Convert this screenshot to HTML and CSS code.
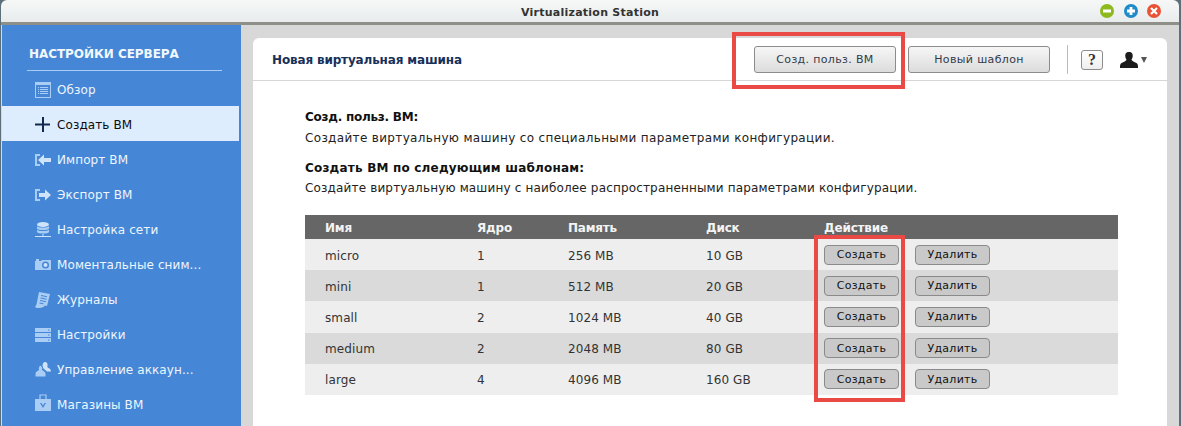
FILE: index.html
```html
<!DOCTYPE html>
<html lang="ru">
<head>
<meta charset="utf-8">
<title>Virtualization Station</title>
<link rel="stylesheet" href="styles.css">
</head>
<body>
<div class="window">
  <header class="titlebar">
    <span class="title">Virtualization Station</span>
    <div class="winbtns">
      <svg class="winbtn" viewBox="0 0 14 14"><circle cx="7" cy="7" r="7" fill="#8db81e"/><rect x="3" y="5.5" width="8" height="3" fill="#fff"/></svg>
      <svg class="winbtn" viewBox="0 0 14 14"><circle cx="7" cy="7" r="7" fill="#1f8bc8"/><path d="M3 5.6h2.6V3h2.8v2.6H11v2.8H8.4V11H5.6V8.4H3z" fill="#fff"/></svg>
      <svg class="winbtn" viewBox="0 0 14 14"><circle cx="7" cy="7" r="7" fill="#ea5236"/><path d="M4 4l6 6M10 4l-6 6" stroke="#fff" stroke-width="2.2"/></svg>
    </div>
  </header>
  <div class="body">
    <aside class="sidebar">
      <h2 class="side-title">НАСТРОЙКИ СЕРВЕРА</h2>
      <nav class="side-nav">
        <a class="item"><svg class="ico" viewBox="0 0 16 16"><path d="M0 0h16v16H0z" fill="#a9cdf5"/><path d="M1 3h14v12H1z" fill="#4587d6"/><path d="M3 5h1v1H3zM5 5h8v1H5zM3 7h1v1H3zM5 7h8v1H5zM3 9h1v1H3zM5 9h8v1H5zM3 11h1v1H3zM5 11h8v1H5z" fill="#a9cdf5"/></svg>Обзор</a>
        <a class="item active"><svg class="ico" viewBox="0 0 16 16"><path d="M7 0h2v15H7zM0 6.500h15v2H0z" fill="#10294f"/></svg>Создать ВМ</a>
        <a class="item"><svg class="ico" viewBox="0 0 16 16"><path d="M0 2h5v2H2v8h3v2H0z" fill="#a9cdf5"/><path d="M3 8l6-5.500V6h7v4H9v3.500z" fill="#cfe3fa"/></svg>Импорт ВМ</a>
        <a class="item"><svg class="ico" viewBox="0 0 16 16"><path d="M0 2h5v2H2v8h3v2H0z" fill="#a9cdf5"/><path d="M16 8l-6-5.500V6H4v4h6v3.500z" fill="#cfe3fa"/></svg>Экспорт ВМ</a>
        <a class="item"><svg class="ico" viewBox="0 0 16 16"><ellipse cx="8" cy="2.500" rx="6" ry="2.500" fill="#cfe3fa"/><path d="M2 4c1 2 11 2 12 0v2.500c-1 2-11 2-12 0zM2 7.500c1 2 11 2 12 0V10c-1 2-11 2-12 0z" fill="#a9cdf5"/><path d="M7.500 12h1v2h-1zM0 14h16v1H0z" fill="#cfe3fa"/></svg>Настройка сети</a>
        <a class="item"><svg class="ico" viewBox="0 0 16 16"><path d="M0 4h1V2h3v2h2l1-1h9v10H0z" fill="#a9cdf5"/><circle cx="10.500" cy="8" r="3.500" fill="#4587d6"/><circle cx="10.500" cy="8" r="2" fill="#cfe3fa"/></svg>Моментальные сним...</a>
        <a class="item"><svg class="ico" viewBox="0 0 16 16"><path d="M4 0l11 2-3 12-2-.4C9 15 7 16 4 16c-2 0-4-.5-4-1.500 1-.5 1.500-2 1.800-3.500z" fill="#a9cdf5"/><path d="M6 3.500l6 1.200M5.500 6l6 1.200M5 8.500l6 1.200M4.500 11l4 .8" stroke="#4587d6"/></svg>Журналы</a>
        <a class="item"><svg class="ico" viewBox="0 0 16 16"><path d="M0 1h16v4H0zM0 6h16v4H0zM0 11h16v4H0z" fill="#a9cdf5"/><path d="M13 2.500h1.500v1H13zM13 7.500h1.500v1H13zM13 12.500h1.500v1H13z" fill="#4587d6"/></svg>Настройки</a>
        <a class="item"><svg class="ico" viewBox="0 0 16 16"><path d="M10 0c2.500 0 3 2.500 2.300 5 1.500 1.500 3.700 1.500 3.700 4.500h-4L8 6c-1-3 0-6 2-6z" fill="#cfe3fa"/><path d="M5.500 3.500c2 0 2.500 2.500 2 4.500 1.500 1 3.500 1.500 3.500 4v3H0v-3c0-2.500 2-3 3.500-4C3 6 3.500 3.500 5.500 3.500z" fill="#a9cdf5" stroke="#4587d6"/></svg>Управление аккаун...</a>
        <a class="item"><svg class="ico ico-tall" viewBox="0 0 16 18"><path d="M5 5V1h6v4" fill="none" stroke="#a9cdf5" stroke-width="1.200"/><path d="M0 5h16v12H0z" fill="#a9cdf5"/><path d="M5 9l3 5 3-5h-1.500L8 11.500 6.500 9z" fill="#4587d6"/></svg>Магазины ВМ</a>
      </nav>
    </aside>
    <main class="main">
      <section class="card">
        <div class="card-head">
          <h1 class="card-title">Новая виртуальная машина</h1>
          <div class="actions">
            <button class="btn">Созд. польз. ВМ</button>
            <button class="btn">Новый шаблон</button>
            <span class="divider"></span>
            <span class="help">?</span>
            <svg class="user" viewBox="0 0 27 16"><path d="M9 0c3 0 4 2 3.700 4.500-.2 1.500-.8 2.500-1.300 3.300.3 1.200 3 2.200 5 3.200 1.600.9 1.600 2.500 1.600 5H0c0-2.500 0-4.100 1.600-5 2-1 4.700-2 5-3.200C6.100 7 5.500 6 5.300 4.500 5 2 6 0 9 0z" fill="#1c1c1c"/><path d="M21 5h6l-3 6z" fill="#555"/></svg>
          </div>
        </div>
        <div class="card-body">
          <p class="lead lead-1">Созд. польз. ВМ:</p>
          <p class="desc desc-1">Создайте виртуальную машину со специальными параметрами конфигурации.</p>
          <p class="lead lead-2">Создать ВМ по следующим шаблонам:</p>
          <p class="desc desc-2">Создайте виртуальную машину с наиболее распространенными параметрами конфигурации.</p>
          <table class="vm-table">
            <thead>
              <tr><th class="c-name">Имя</th><th class="c-core">Ядро</th><th class="c-mem">Память</th><th class="c-disk">Диск</th><th>Действие</th></tr>
            </thead>
            <tbody>
              <tr><td>micro</td><td>1</td><td>256 MB</td><td>10 GB</td><td><button class="rbtn">Создать</button><button class="rbtn">Удалить</button></td></tr>
              <tr><td>mini</td><td>1</td><td>512 MB</td><td>20 GB</td><td><button class="rbtn">Создать</button><button class="rbtn">Удалить</button></td></tr>
              <tr><td>small</td><td>2</td><td>1024 MB</td><td>40 GB</td><td><button class="rbtn">Создать</button><button class="rbtn">Удалить</button></td></tr>
              <tr><td>medium</td><td>2</td><td>2048 MB</td><td>80 GB</td><td><button class="rbtn">Создать</button><button class="rbtn">Удалить</button></td></tr>
              <tr><td>large</td><td>4</td><td>4096 MB</td><td>160 GB</td><td><button class="rbtn">Создать</button><button class="rbtn">Удалить</button></td></tr>
            </tbody>
          </table>
        </div>
      </section>
    </main>
  </div>
</div>
<div class="mark mark-top"></div>
<div class="mark mark-col"></div>
</body>
</html>
```
FILE: styles.css
```css
* { box-sizing: border-box; }
html, body { margin: 0; height: 100%; overflow: hidden; }
body {
  background: #5d6f78;
  font-family: "DejaVu Sans", Verdana, sans-serif;
  font-size: 12px;
  color: #222;
  position: relative;
}
.window {
  height: 426px;
  margin: 0 2px 0 1px;
  display: flex;
  flex-direction: column;
}
.titlebar {
  height: 25px;
  flex: none;
  position: relative;
  display: flex;
  align-items: center;
  justify-content: center;
  padding: 3px 0 0;
  background: linear-gradient(#f6f8f8, #e9ecec);
  border-bottom: 3px solid #8f8f8a;
  border-radius: 6px 6px 0 0;
}
.title {
  font-size: 11px;
  font-weight: bold;
  color: #333;
  letter-spacing: 0.25px;
}
.winbtns {
  position: absolute;
  right: 18px;
  top: 4px;
  display: flex;
  gap: 9.5px;
}
.winbtn { width: 14px; height: 14px; display: block; }
.body { flex: 1; display: flex; min-height: 0; background: #d8d8d8; }
.sidebar {
  width: 239px;
  flex: none;
  background: #4587d6;
  padding-top: 21px;
  margin-left: 1px;
}
.side-title {
  margin: 0 19px 0 25px;
  padding: 0 0 9px 2px;
  height: 25px;
  font-size: 12px;
  line-height: 16px;
  font-weight: bold;
  color: #f2f7fd;
  letter-spacing: -0.05px;
  border-bottom: 1px solid #a9cdf5;
  white-space: nowrap;
}
.item {
  height: 35px;
  margin-right: 2px;
  display: flex;
  align-items: center;
  padding: 2px 0 0 33px;
  color: #eef5fd;
  letter-spacing: 0.1px;
  white-space: nowrap;
}
.item.active { background: #deedfe; color: #0c0c0c; }
.ico { width: 16px; height: 16px; flex: none; margin-right: 6px; }
.ico-tall { height: 18px; margin-top: -4px; }
.main { flex: 1; padding: 13px 12px 0 12px; min-width: 0; }
.card {
  height: 100%;
  background: #fff;
  border-radius: 6px 6px 0 0;
}
.card-head {
  height: 43px;
  display: flex;
  align-items: center;
  justify-content: space-between;
  padding: 0 20px 0 19px;
  border-bottom: 1px solid #d6d6d6;
}
.card-title {
  margin: 1px 0 0;
  font-size: 12px;
  font-weight: bold;
  color: #17305a;
  letter-spacing: -0.15px;
}
.actions { display: flex; align-items: center; margin-top: 1px; }
.btn {
  width: 142px;
  height: 27px;
  padding: 0;
  margin-left: 12px;
  font: 11px "DejaVu Sans", Verdana, sans-serif;
  letter-spacing: 0.35px;
  color: #333a4a;
  background: linear-gradient(#f6f6f6, #dcdcdc);
  border: 1px solid #8c8c8c;
  border-radius: 3px;
}
.divider { width: 1px; height: 29px; background: #bbb; margin: 0 13px 0 17px; }
.help {
  width: 22px;
  height: 20px;
  display: flex;
  align-items: center;
  justify-content: center;
  font: bold 16px "Liberation Serif", serif;
  color: #333;
  border: 1px solid #8c8c8c;
  border-radius: 3px;
  background: linear-gradient(#fff, #eee);
}
.user { width: 27px; height: 16px; margin-left: 17px; }
.card-body { padding: 28px 49px 0 52px; }
.lead { margin: 0; font-weight: bold; color: #111; line-height: 16px; }
.lead-1 { letter-spacing: -0.25px; }
.lead-2 { margin-top: 14px; letter-spacing: 0.2px; }
.desc { margin: 5px 0 0; line-height: 16px; color: #222; }
.desc-1 { letter-spacing: 0.34px; }
.desc-2 { margin-top: 4px; letter-spacing: 0.16px; }
.vm-table {
  width: 813px;
  margin-top: 19px;
  border-collapse: collapse;
  table-layout: fixed;
  font-size: 12px;
}
.vm-table th {
  height: 24px;
  padding: 1px 0 0;
  background: #666;
  color: #f4f4f4;
  font-size: 12px;
  font-weight: bold;
  text-align: left;
  letter-spacing: -0.2px;
}
.vm-table td { height: 31.2px; padding: 2px 0 0; color: #333; letter-spacing: 0.1px; }
.vm-table td:last-child { padding-top: 0; }
.vm-table tbody tr:nth-child(odd) { background: #eeeeee; }
.vm-table tbody tr:nth-child(even) { background: #dadada; }
.vm-table th:first-child, .vm-table td:first-child { padding-left: 20px; }
.c-name { width: 172px; }
.c-core { width: 91px; }
.c-mem { width: 138px; }
.c-disk { width: 118px; }
.rbtn {
  display: inline-block;
  vertical-align: middle;
  width: 75px;
  height: 20px;
  padding: 0;
  margin-right: 16px;
  font: 11px "DejaVu Sans", Verdana, sans-serif;
  letter-spacing: 0.3px;
  color: #111;
  background: #c9c9c9;
  border: 1px solid #8a8a8a;
  border-radius: 4px;
}
.mark { position: absolute; border: 4px solid #ea4a46; pointer-events: none; }
.mark-top { left: 732px; top: 32px; width: 173px; height: 57px; }
.mark-col { left: 814px; top: 235px; width: 91px; height: 167px; }
```
